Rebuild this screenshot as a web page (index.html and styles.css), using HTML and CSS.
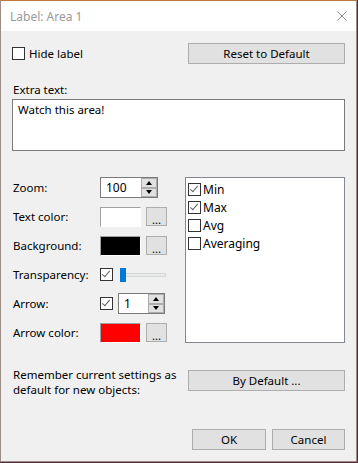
FILE: index.html
```html
<!DOCTYPE html>
<html lang="en">
<head>
    <meta charset="UTF-8">
    <title>Label: Area 1</title>
    <link rel="stylesheet" href="styles.css">
</head>
<body>
    <div class="window">
        <div class="titlebar">
            <span class="title">Label: Area 1</span>
            <svg class="close" width="10" height="10" viewBox="0 0 10 10">
                <path d="M0.5 0.5 L9.5 9.5 M9.5 0.5 L0.5 9.5" stroke="#8a8a8a" stroke-width="1" fill="none"/>
            </svg>
        </div>

        <div class="content">
            <div class="top-row">
                <label class="check">
                    <span class="box"></span>
                    <span>Hide label</span>
                </label>
                <button class="btn btn-wide">Reset to Default</button>
            </div>

            <div class="extra">
                <div class="caption">Extra text:</div>
                <div class="textarea">Watch this area!</div>
            </div>

            <div class="middle">
                <div class="fields">
                    <span class="lbl">Zoom:</span>
                    <div class="ctl">
                        <div class="spin spin-zoom">
                            <span class="spin-value">100</span>
                            <span class="spin-btns">
                                <span class="spin-btn"><span class="tri up"></span></span>
                                <span class="spin-btn"><span class="tri down"></span></span>
                            </span>
                        </div>
                    </div>

                    <span class="lbl">Text color:</span>
                    <div class="ctl">
                        <span class="swatch white"></span>
                        <button class="btn btn-dots">...</button>
                    </div>

                    <span class="lbl">Background:</span>
                    <div class="ctl">
                        <span class="swatch black"></span>
                        <button class="btn btn-dots">...</button>
                    </div>

                    <span class="lbl">Transparency:</span>
                    <div class="ctl">
                        <span class="box checked"></span>
                        <div class="slider">
                            <span class="track"></span>
                            <span class="thumb"></span>
                        </div>
                    </div>

                    <span class="lbl">Arrow:</span>
                    <div class="ctl">
                        <span class="box checked"></span>
                        <div class="spin spin-arrow">
                            <span class="spin-value">1</span>
                            <span class="spin-btns">
                                <span class="spin-btn"><span class="tri up"></span></span>
                                <span class="spin-btn"><span class="tri down"></span></span>
                            </span>
                        </div>
                    </div>

                    <span class="lbl">Arrow color:</span>
                    <div class="ctl">
                        <span class="swatch red"></span>
                        <button class="btn btn-dots">...</button>
                    </div>
                </div>

                <div class="listbox">
                    <div class="item"><span class="box checked"></span>Min</div>
                    <div class="item"><span class="box checked"></span>Max</div>
                    <div class="item"><span class="box"></span>Avg</div>
                    <div class="item"><span class="box"></span>Averaging</div>
                </div>
            </div>

            <div class="remember">
                <p>Remember current settings as<br>default for new objects:</p>
                <button class="btn btn-wide">By Default ...</button>
            </div>

            <div class="footer">
                <button class="btn btn-ok">OK</button>
                <button class="btn btn-cancel">Cancel</button>
            </div>
        </div>
    </div>
</body>
</html>
```

FILE: styles.css
```css
:root {
    --face: #f0f0f0;
    --btn-face: #e1e1e1;
    --btn-border: #adadad;
    --edit-border: #7a7a7a;
    --text: #000;
}

body {
    margin: 0;
    width: 358px;
    height: 463px;
    background: #5a2a3a;
    font-family: 'Noto Sans', sans-serif;
    font-size: 11.5px;
    color: var(--text);
    overflow: hidden;
}

.window {
    width: 357px;
    height: 462px;
    box-sizing: border-box;
    border: 1px solid #9c8c86;
    border-top-color: #c0763a;
    background: var(--face);
    display: flex;
    flex-direction: column;
}

.titlebar {
    height: 30px;
    background: #fff;
    display: flex;
    align-items: center;
    justify-content: space-between;
    padding: 0 9px 0 9px;
    flex-shrink: 0;
}

.title {
    color: #9a9a9a;
    font-size: 12px;
}

.content {
    flex: 1;
    padding: 12px 11px 0 11px;
    display: flex;
    flex-direction: column;
}

/* checkboxes */
.box {
    width: 13px;
    height: 13px;
    box-sizing: border-box;
    border: 1px solid #333;
    background: #fff;
    display: inline-block;
    flex-shrink: 0;
    position: relative;
}

.box.checked::after {
    content: '';
    position: absolute;
    left: 3px;
    top: 0px;
    width: 3px;
    height: 7px;
    border: solid #606060;
    border-width: 0 1px 1px 0;
    transform: rotate(40deg);
}

.check {
    display: flex;
    align-items: center;
    gap: 4px;
}

/* buttons */
.btn {
    font-family: inherit;
    font-size: 11.5px;
    color: var(--text);
    background: var(--btn-face);
    border: 1px solid var(--btn-border);
    padding: 0;
    margin: 0;
    height: 21px;
    box-sizing: border-box;
}

.btn-wide {
    width: 157px;
}

.top-row {
    display: flex;
    justify-content: space-between;
    align-items: center;
    height: 21px;
}

.extra {
    margin-top: 18px;
}

.caption {
    line-height: 16px;
    margin-left: 1px;
}

.textarea {
    margin-top: 1px;
    height: 52px;
    box-sizing: border-box;
    border: 1px solid var(--edit-border);
    background: #fff;
    padding: 2px 5px;
    line-height: 16px;
}

/* middle section */
.middle {
    margin-top: 26px;
    display: flex;
    justify-content: space-between;
}

.fields {
    display: grid;
    grid-template-columns: 88px auto;
    grid-auto-rows: 21px;
    row-gap: 8px;
    align-items: center;
}

.lbl {
    padding-left: 1px;
}

.ctl {
    display: flex;
    align-items: center;
    gap: 5px;
    height: 21px;
}

.spin {
    display: flex;
    height: 21px;
    box-sizing: border-box;
    border: 1px solid var(--edit-border);
    background: #fff;
}

.spin-zoom {
    width: 58px;
}

.spin-arrow {
    width: 47px;
}

.spin-value {
    flex: 1;
    padding-left: 5px;
    line-height: 19px;
    font-size: 12px;
}

.spin-btns {
    display: flex;
    flex-direction: column;
    width: 16px;
    border-left: 1px solid #fff;
}

.spin-btn {
    flex: 1;
    background: var(--btn-face);
    border: 1px solid var(--btn-border);
    display: flex;
    align-items: center;
    justify-content: center;
}

.tri {
    width: 0;
    height: 0;
    border-left: 3px solid transparent;
    border-right: 3px solid transparent;
}

.tri.up {
    border-bottom: 4px solid #000;
}

.tri.down {
    border-top: 4px solid #000;
}

.swatch {
    width: 41px;
    height: 20px;
    box-sizing: border-box;
    border: 1px solid #a0a0a0;
    border-right-color: #fff;
    border-bottom-color: #fff;
}

.swatch.white { background: #fff; }
.swatch.black { background: #000; }
.swatch.red { background: #ff0000; }

.btn-dots {
    width: 21px;
    height: 19px;
    line-height: 20px;
    padding-top: 2px;
}

.slider {
    position: relative;
    width: 46px;
    height: 14px;
    margin-left: 2px;
}

.track {
    position: absolute;
    left: 0;
    right: 0;
    top: 5px;
    height: 4px;
    box-sizing: border-box;
    background: #e7eaea;
    border: 1px solid #d6d6d6;
}

.thumb {
    position: absolute;
    left: 0;
    top: 0;
    width: 6px;
    height: 14px;
    background: #0078d7;
}

.listbox {
    width: 160px;
    height: 166px;
    box-sizing: border-box;
    border: 1px solid #828790;
    background: #fff;
    padding: 2px 2px;
}

.item {
    display: flex;
    align-items: center;
    gap: 2px;
    height: 18px;
    font-size: 12px;
}

/* bottom */
.remember {
    margin-top: 27px;
    display: flex;
    justify-content: space-between;
    align-items: flex-start;
}

.remember p {
    margin: -3px 0 0 1px;
    line-height: 15px;
}

.footer {
    margin-top: 32px;
    display: flex;
    justify-content: flex-end;
    gap: 6px;
}

.btn-ok {
    width: 74px;
}

.btn-cancel {
    width: 73px;
}
```
